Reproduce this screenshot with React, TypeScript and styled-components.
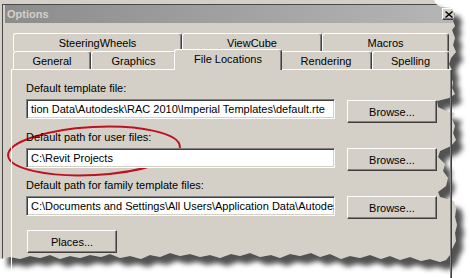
import React from "react";
import styled, { createGlobalStyle } from "styled-components";

const Global = createGlobalStyle`
  html, body { margin: 0; padding: 0; background: #fff; }
  body { font-family: "Liberation Sans", Arial, sans-serif; font-size: 11px; color: #000; }
`;

const Page = styled.div`
  position: relative;
  width: 470px;
  height: 278px;
  overflow: hidden;
  background: #fff;
`;

const Window = styled.div`
  width: 470px;
  height: 278px;
  box-sizing: border-box;
  background: #d4d0c8;
  padding: 4px 0 0 2px;
`;

const Frame = styled.div`
  height: 100%;
  box-sizing: border-box;
  border-left: 1px solid #4a4a4a;
  border-top: 1px solid #4a4a4a;
  padding-left: 2px;
`;

const TitleBar = styled.div`
  width: 453px;
  height: 18px;
  box-sizing: border-box;
  padding: 0 2px 0 2px;
  display: flex;
  align-items: center;
  justify-content: space-between;
  background: linear-gradient(to right, #8c8c8c, #b6b6b6);
`;

const Title = styled.span`
  font-weight: bold;
  font-size: 11px;
  color: #d4d0c8;
`;

const CloseButton = styled.div`
  width: 14px;
  height: 12px;
  box-sizing: border-box;
  background: #d4d0c8;
  border: 1px solid;
  border-color: #fff #404040 #404040 #fff;
  box-shadow: inset -1px -1px #808080;
  display: flex;
  align-items: center;
  justify-content: center;
`;

const Body = styled.div`
  padding: 10px 0 0 6px;
`;

const TabRow = styled.div`
  display: flex;
  align-items: flex-end;
  height: 18px;
  margin-left: 2px;
`;

const Tab = styled.div<{ $w: number; $selected?: boolean }>`
  position: relative;
  z-index: ${(p) => (p.$selected ? 2 : 0)};
  width: ${(p) => p.$w}px;
  height: ${(p) => (p.$selected ? 21 : 18)}px;
  margin: ${(p) => (p.$selected ? "0 -2px -1px -2px" : "0")};
  box-sizing: border-box;
  flex: none;
  background: #d4d0c8;
  border-top: 1px solid #fff;
  border-left: 1px solid #fff;
  border-right: 1px solid #404040;
  border-radius: 3px 3px 0 0;
  box-shadow: inset -1px 0 #808080;
  display: flex;
  align-items: center;
  justify-content: center;
  padding-bottom: ${(p) => (p.$selected ? 3 : 0)}px;
  font-size: 11px;
  white-space: nowrap;
`;

const Panel = styled.div`
  position: relative;
  z-index: 1;
  width: 441px;
  height: 220px;
  box-sizing: border-box;
  border: 1px solid;
  border-color: #fff #404040 #404040 #fff;
  box-shadow: inset -1px -1px #808080;
  padding: 12px 0 0 14px;
  display: flex;
  flex-direction: column;
  gap: 8px;
`;

const Group = styled.div`
  display: flex;
  flex-direction: column;
  gap: 4px;
`;

const Label = styled.div`
  height: 13px;
  line-height: 13px;
  font-size: 11px;
  white-space: nowrap;
`;

const FieldRow = styled.div`
  display: flex;
  align-items: flex-start;
  gap: 12px;
`;

const Field = styled.div`
  width: 309px;
  height: 20px;
  box-sizing: border-box;
  background: #fff;
  border: 1px solid;
  border-color: #808080 #fff #fff #808080;
  box-shadow: inset 1px 1px #404040, inset -1px -1px #d4d0c8;
  padding: 0 3px 0 4px;
  line-height: 18px;
  font-size: 11px;
  white-space: nowrap;
  overflow: hidden;
`;

const Button = styled.div<{ $top?: number }>`
  width: 90px;
  height: 23px;
  margin-top: ${(p) => p.$top ?? 0}px;
  box-sizing: border-box;
  background: #d4d0c8;
  border: 1px solid;
  border-color: #fff #404040 #404040 #fff;
  box-shadow: inset -1px -1px #808080;
  display: flex;
  align-items: center;
  justify-content: center;
  font-size: 11px;
  flex: none;
`;

const PlacesWrap = styled.div`
  margin-top: 3px;
  padding-left: 1px;
`;

const Overlay = styled.svg`
  position: absolute;
  left: 0;
  top: 0;
  pointer-events: none;
`;

const rightEdge: [number, number][] = [
  [434, 0], [436, 4], [441, 7], [452, 8], [455, 14], [453, 21], [455, 26], [452, 30],
  [455, 38], [453, 45], [456, 52], [451, 58], [449, 64], [452, 70], [450, 76],
  [453, 82], [452, 88], [455, 94], [449, 98], [437, 101], [438, 107], [446, 111],
  [455, 113], [452, 119], [455, 126], [453, 133], [456, 140], [451, 146], [440, 151],
  [438, 157], [445, 164], [443, 171], [448, 178], [446, 186], [438, 192], [440, 197],
  [454, 201], [456, 209], [455, 217], [457, 225], [455, 233], [456, 241], [452, 249],
  [450, 255], [446, 260],
];
const bottomEdge: [number, number][] = [
  [440, 262], [430, 259], [421, 261], [410, 257], [400, 260], [390, 256], [381, 259],
  [370, 255], [360, 258], [350, 256], [341, 259], [330, 254], [320, 257], [311, 253],
  [300, 256], [290, 254], [280, 258], [271, 255], [260, 257], [250, 253], [240, 256],
  [231, 254], [220, 258], [210, 255], [200, 257], [190, 254], [180, 256], [170, 253],
  [160, 257], [150, 255], [141, 259], [130, 256], [120, 258], [110, 254], [101, 257],
  [90, 255], [80, 258], [70, 256], [60, 259], [50, 255], [40, 258], [30, 256],
  [20, 259], [10, 257], [0, 259],
];
const torn =
  "M0 0 " +
  [...rightEdge, ...bottomEdge].map(([x, y]) => `L${x} ${y}`).join(" ") +
  " Z";

const TornEdge = () => (
  <Overlay width={470} height={278} viewBox="0 0 470 278">
    <defs>
      <filter id="soft" x="-10%" y="-10%" width="120%" height="120%">
        <feGaussianBlur stdDeviation="2.8" />
      </filter>
      <clipPath id="outside">
        <path d={`M0 0H470V278H0Z ${torn}`} clipRule="evenodd" />
      </clipPath>
    </defs>
    <g clipPath="url(#outside)">
      <rect width={470} height={278} fill="#fff" />
      <path d={torn} transform="translate(7,8)" fill="#404040" opacity={0.9} filter="url(#soft)" />
    </g>
    <ellipse
      cx={94}
      cy={151}
      rx={86}
      ry={24}
      fill="none"
      stroke="#bf1020"
      strokeWidth={2}
      transform="rotate(-3 94 151)"
    />
  </Overlay>
);

const backTabs = [
  { label: "SteeringWheels", w: 169 },
  { label: "ViewCube", w: 140 },
  { label: "Macros", w: 127 },
];
const frontTabs = [
  { label: "General", w: 78 },
  { label: "Graphics", w: 85 },
  { label: "File Locations", w: 108, selected: true },
  { label: "Rendering", w: 92 },
  { label: "Spelling", w: 77 },
];

const groups = [
  { label: "Default template file:", value: "tion Data\\Autodesk\\RAC 2010\\Imperial Templates\\default.rte", top: 1 },
  { label: "Default path for user files:", value: "C:\\Revit Projects", top: 0 },
  {
    label: "Default path for family template files:",
    value: "C:\\Documents and Settings\\All Users\\Application Data\\Autodesk",
    top: 0,
  },
];

export default function App() {
  return (
    <Page>
      <Global />
      <Window>
        <Frame>
          <TitleBar>
            <Title>Options</Title>
            <CloseButton>
              <svg width="8" height="7" viewBox="0 0 8 7">
                <path d="M0.5 0.5L7.5 6.5M7.5 0.5L0.5 6.5" stroke="#000" strokeWidth="1.4" />
              </svg>
            </CloseButton>
          </TitleBar>
          <Body>
            <TabRow>
              {backTabs.map((t) => (
                <Tab key={t.label} $w={t.w}>{t.label}</Tab>
              ))}
            </TabRow>
            <TabRow>
              {frontTabs.map((t) => (
                <Tab key={t.label} $w={t.w} $selected={t.selected}>{t.label}</Tab>
              ))}
            </TabRow>
            <Panel>
              {groups.map((g) => (
                <Group key={g.label}>
                  <Label>{g.label}</Label>
                  <FieldRow>
                    <Field>{g.value}</Field>
                    <Button $top={g.top}>Browse...</Button>
                  </FieldRow>
                </Group>
              ))}
              <PlacesWrap>
                <Button>Places...</Button>
              </PlacesWrap>
            </Panel>
          </Body>
        </Frame>
      </Window>
      <TornEdge />
    </Page>
  );
}
